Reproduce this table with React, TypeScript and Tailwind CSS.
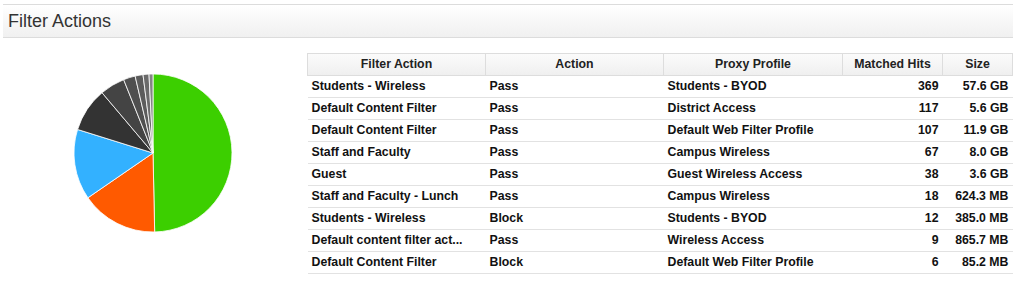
import React from "react";

const rows = [
  { name: "Students - Wireless", action: "Pass", profile: "Students - BYOD", hits: 369, size: "57.6 GB" },
  { name: "Default Content Filter", action: "Pass", profile: "District Access", hits: 117, size: "5.6 GB" },
  { name: "Default Content Filter", action: "Pass", profile: "Default Web Filter Profile", hits: 107, size: "11.9 GB" },
  { name: "Staff and Faculty", action: "Pass", profile: "Campus Wireless", hits: 67, size: "8.0 GB" },
  { name: "Guest", action: "Pass", profile: "Guest Wireless Access", hits: 38, size: "3.6 GB" },
  { name: "Staff and Faculty - Lunch", action: "Pass", profile: "Campus Wireless", hits: 18, size: "624.3 MB" },
  { name: "Students - Wireless", action: "Block", profile: "Students - BYOD", hits: 12, size: "385.0 MB" },
  { name: "Default content filter act...", action: "Pass", profile: "Wireless Access", hits: 9, size: "865.7 MB" },
  { name: "Default Content Filter", action: "Block", profile: "Default Web Filter Profile", hits: 6, size: "85.2 MB" },
];

const colors = ["#3ccf00", "#ff5a00", "#33b1ff", "#333333", "#444444", "#4f4f4f", "#5c5c5c", "#6b6b6b", "#858585"];

// pie chart, slices clockwise from 12 o'clock
const Pie = () => {
  const total = rows.reduce((s, r) => s + r.hits, 0);
  const cx = 80;
  const cy = 80;
  const r = 79;
  let start = 0;
  const slices = rows.map((row, i) => {
    const a0 = (start / total) * Math.PI * 2;
    start += row.hits;
    const a1 = (start / total) * Math.PI * 2;
    const x0 = cx + r * Math.sin(a0);
    const y0 = cy - r * Math.cos(a0);
    const x1 = cx + r * Math.sin(a1);
    const y1 = cy - r * Math.cos(a1);
    const large = a1 - a0 > Math.PI ? 1 : 0;
    const d = `M${cx},${cy} L${x0},${y0} A${r},${r} 0 ${large} 1 ${x1},${y1} Z`;
    return <path key={i} d={d} fill={colors[i]} stroke="#ffffff" strokeWidth={0.8} strokeLinejoin="round" />;
  });
  return (
    <svg width={160} height={160} viewBox="0 0 160 160">
      {slices}
    </svg>
  );
};

export default function App() {
  return (
    <div className="w-[1013px] pl-[3px] pt-[4px] bg-white text-[#111]" style={{ fontFamily: '"Liberation Sans", Arial, sans-serif' }}>
      {/* Title bar */}
      <div className="h-[34px] border-y border-[#dcdcdc] bg-gradient-to-b from-white to-[#f0f0f0] flex items-center pl-[5px]">
        <h2 className="text-[18px] leading-none text-[#333]">Filter Actions</h2>
      </div>

      <div className="flex">
        <div className="w-[305px] pl-[70px] pt-[35px]">
          <Pie />
        </div>

        <table className="mt-[15px] w-[705px] border-collapse table-fixed text-[12.3px] font-bold leading-none">
          <colgroup>
            <col className="w-[178px]" />
            <col className="w-[178px]" />
            <col className="w-[179px]" />
            <col className="w-[100px]" />
            <col className="w-[70px]" />
          </colgroup>
          <thead>
            <tr className="h-[22px] bg-gradient-to-b from-[#fbfbfb] to-[#efefef] text-[#222]">
              <th className="border border-[#dddddd] font-bold">Filter Action</th>
              <th className="border border-[#dddddd] font-bold">Action</th>
              <th className="border border-[#dddddd] font-bold">Proxy Profile</th>
              <th className="border border-[#dddddd] font-bold">Matched Hits</th>
              <th className="border border-[#dddddd] font-bold">Size</th>
            </tr>
          </thead>
          <tbody>
            {rows.map((row, i) => (
              <tr key={i} className="h-[22px] border-b border-[#e2e2e2]">
                <td className="pl-[4px] whitespace-nowrap overflow-hidden">{row.name}</td>
                <td className="pl-[4px]">{row.action}</td>
                <td className="pl-[4px] whitespace-nowrap">{row.profile}</td>
                <td className="pr-[4px] text-right">{row.hits}</td>
                <td className="pr-[4px] text-right">{row.size}</td>
              </tr>
            ))}
          </tbody>
        </table>
      </div>
    </div>
  );
}
